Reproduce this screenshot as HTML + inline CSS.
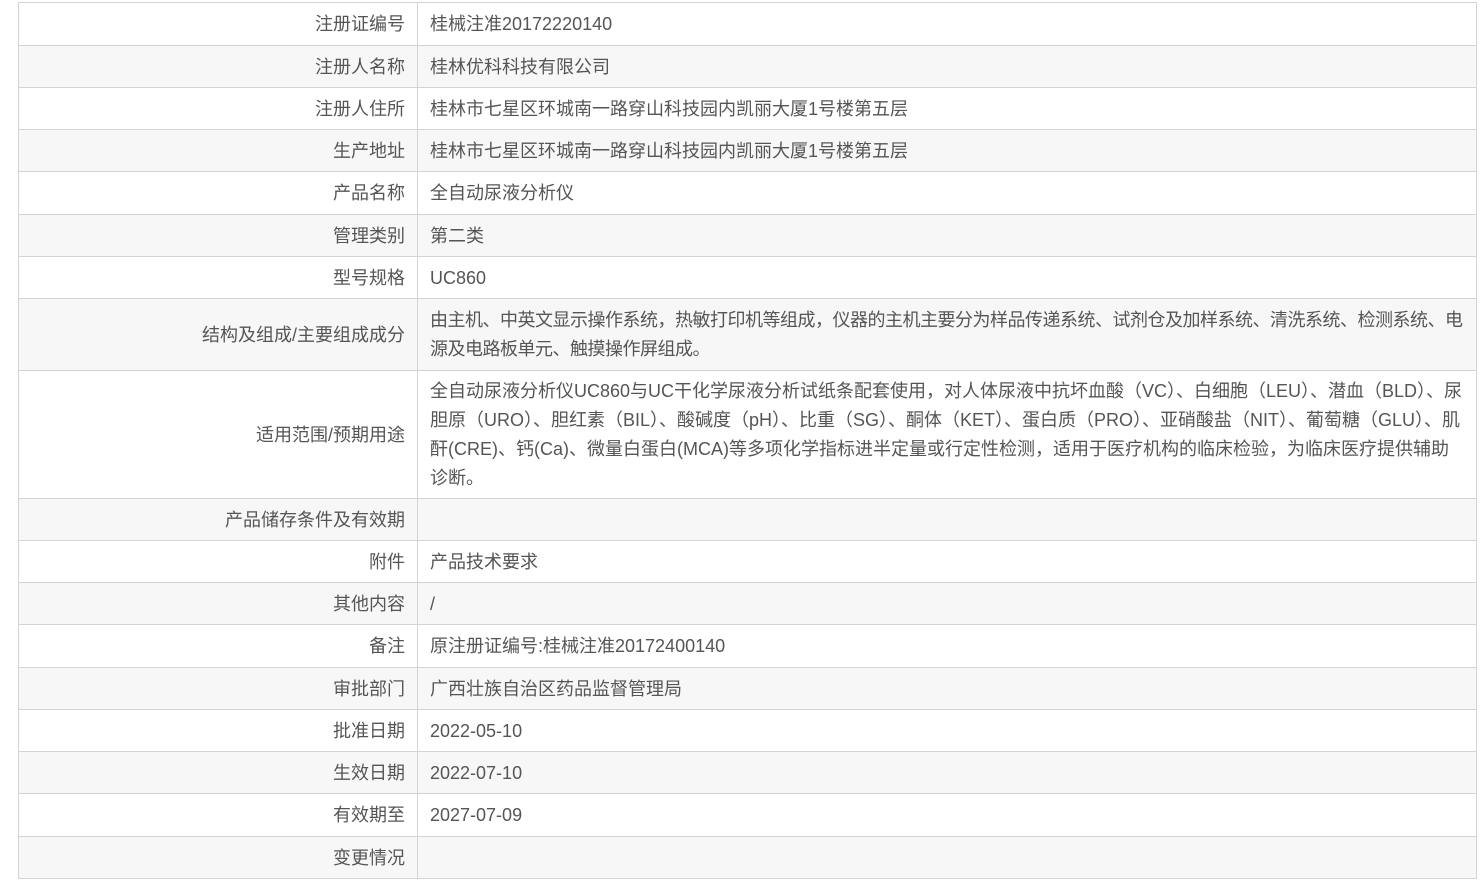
<!DOCTYPE html>
<html><head><meta charset="utf-8"><style>
html,body{margin:0;padding:0;background:#fff;width:1481px;height:881px;overflow:hidden}
table{position:absolute;left:18px;top:2px;width:1459px;border-collapse:collapse;font-family:"Liberation Sans","Noto Sans CJK SC",sans-serif;font-size:18px;color:#555}
td{border:1px solid #d4d4d4;padding:1px 12px 0 12px;vertical-align:middle;line-height:29px}
td.l{width:374px;text-align:right}
tr:nth-child(even) td{background:#f7f7f7}
</style></head><body>
<table>
<tr style="height:43px"><td class="l">注册证编号</td><td>桂械注准20172220140</td></tr>
<tr style="height:42px"><td class="l">注册人名称</td><td>桂林优科科技有限公司</td></tr>
<tr style="height:42px"><td class="l">注册人住所</td><td>桂林市七星区环城南一路穿山科技园内凯丽大厦1号楼第五层</td></tr>
<tr style="height:42px"><td class="l">生产地址</td><td>桂林市七星区环城南一路穿山科技园内凯丽大厦1号楼第五层</td></tr>
<tr style="height:43px"><td class="l">产品名称</td><td>全自动尿液分析仪</td></tr>
<tr style="height:42px"><td class="l">管理类别</td><td>第二类</td></tr>
<tr style="height:42px"><td class="l">型号规格</td><td>UC860</td></tr>
<tr style="height:72px"><td class="l">结构及组成/主要组成成分</td><td style="letter-spacing:-0.5px">由主机、中英文显示操作系统，热敏打印机等组成，仪器的主机主要分为样品传递系统、试剂仓及加样系统、清洗系统、检测系统、电源及电路板单元、触摸操作屏组成。</td></tr>
<tr style="height:128px"><td class="l">适用范围/预期用途</td><td>全自动尿液分析仪UC860与UC干化学尿液分析试纸条配套使用，对人体尿液中抗坏血酸（VC）、白细胞（LEU）、潜血（BLD）、尿胆原（URO）、胆红素（BIL）、酸碱度（pH）、比重（SG）、酮体（KET）、蛋白质（PRO）、亚硝酸盐（NIT）、葡萄糖（GLU）、肌酐(CRE)、钙(Ca)、微量白蛋白(MCA)等多项化学指标进半定量或行定性检测，适用于医疗机构的临床检验，为临床医疗提供辅助诊断。</td></tr>
<tr style="height:42px"><td class="l">产品储存条件及有效期</td><td></td></tr>
<tr style="height:42px"><td class="l">附件</td><td>产品技术要求</td></tr>
<tr style="height:42px"><td class="l">其他内容</td><td>/</td></tr>
<tr style="height:43px"><td class="l">备注</td><td>原注册证编号:桂械注准20172400140</td></tr>
<tr style="height:42px"><td class="l">审批部门</td><td>广西壮族自治区药品监督管理局</td></tr>
<tr style="height:42px"><td class="l">批准日期</td><td>2022-05-10</td></tr>
<tr style="height:42px"><td class="l">生效日期</td><td>2022-07-10</td></tr>
<tr style="height:43px"><td class="l">有效期至</td><td>2027-07-09</td></tr>
<tr style="height:42px"><td class="l">变更情况</td><td></td></tr>
</table>
</body></html>
